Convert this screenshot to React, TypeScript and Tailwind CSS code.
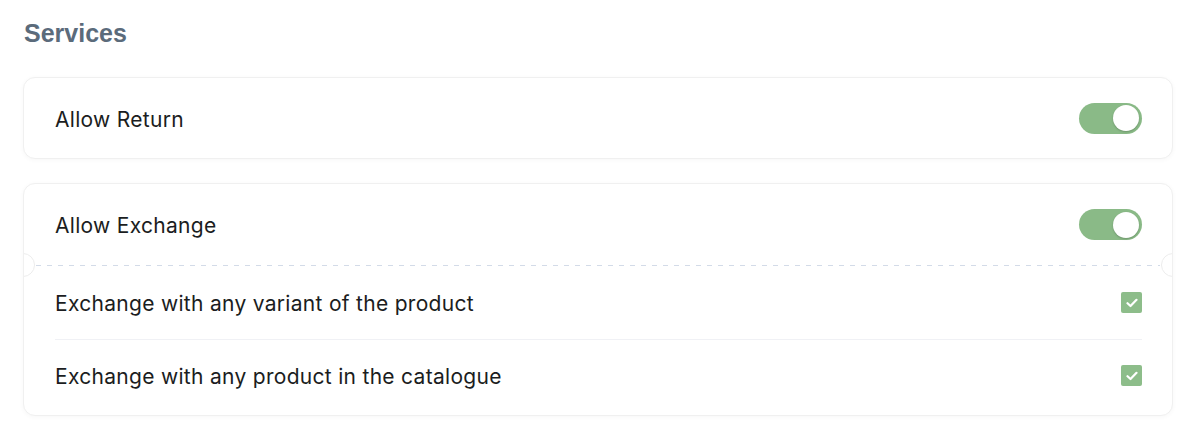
import { useState } from "react";

function Toggle({ on, onChange }: { on: boolean; onChange: (v: boolean) => void }) {
  return (
    <button
      type="button"
      onClick={() => onChange(!on)}
      className={`flex h-[31px] w-[63px] shrink-0 items-center rounded-full p-[3px] ${
        on ? "justify-end bg-[#8aba87]" : "justify-start bg-[#d9dde3]"
      }`}
    >
      <span className="h-[26px] w-[26px] rounded-full bg-white shadow-[0_1px_2px_rgba(0,0,0,0.2)]" />
    </button>
  );
}

function Check({ on, onChange }: { on: boolean; onChange: (v: boolean) => void }) {
  return (
    <button
      type="button"
      onClick={() => onChange(!on)}
      className={`flex h-[21px] w-[21px] shrink-0 items-center justify-center rounded-[2px] ${
        on ? "bg-[#8dbd8a]" : "border border-[#cfd5dd] bg-white"
      }`}
    >
      {on && (
        <svg width="12" height="10" viewBox="0 0 12 10" fill="none">
          <path d="M1.5 5.2 4.5 8 10.5 1.8" stroke="white" strokeWidth="2.2" strokeLinecap="round" strokeLinejoin="round" />
        </svg>
      )}
    </button>
  );
}

const label = "pt-[3px] text-[21px] tracking-[0.3px]";

export default function App() {
  const [allowReturn, setAllowReturn] = useState(true);
  const [allowExchange, setAllowExchange] = useState(true);
  const [anyVariant, setAnyVariant] = useState(true);
  const [anyProduct, setAnyProduct] = useState(true);

  return (
    <div className="min-h-[437px] bg-white pl-[23px] pt-[18px] font-['Inter',sans-serif] text-[#1b1d21]">
      <h2 className="pl-px font-['Liberation_Sans',Arial,sans-serif] text-[25px] font-bold leading-[30px] text-[#5b6b7b]">
        Services
      </h2>

      <div className="mt-[29px] flex w-[1150px] flex-col gap-[24px]">
        {/* Return */}
        <div className="flex h-[82px] items-center justify-between rounded-[12px] border border-[#f0f0f0] bg-white pl-[31px] pr-[30px] shadow-[0_1px_5px_rgba(0,0,0,0.035)]">
          <span className={label}>Allow Return</span>
          <Toggle on={allowReturn} onChange={setAllowReturn} />
        </div>

        {/* Exchange */}
        <div className="relative overflow-hidden rounded-[12px] border border-[#f0f0f0] bg-white shadow-[0_1px_5px_rgba(0,0,0,0.035)]">
          <div className="flex h-[81px] items-center justify-between pl-[31px] pr-[30px]">
            <span className={label}>Allow Exchange</span>
            <Toggle on={allowExchange} onChange={setAllowExchange} />
          </div>

          <div className="relative h-px">
            <div className="mx-[12px] h-px bg-[linear-gradient(to_right,#d3dbe8_50%,transparent_50%)] bg-[length:11px_1px]" />
            <span className="absolute -left-[13px] -top-[12px] h-[24px] w-[24px] rounded-full border border-[#ececec] bg-white" />
            <span className="absolute -right-[13px] -top-[12px] h-[24px] w-[24px] rounded-full border border-[#ececec] bg-white" />
          </div>

          <div className="pb-[4px] pl-[31px] pr-[30px]">
            <div className="flex h-[74px] items-center justify-between border-b border-[#f0f1f5]">
              <span className={label}>Exchange with any variant of the product</span>
              <Check on={anyVariant} onChange={setAnyVariant} />
            </div>
            <div className="flex h-[71px] items-center justify-between">
              <span className={label}>Exchange with any product in the catalogue</span>
              <Check on={anyProduct} onChange={setAnyProduct} />
            </div>
          </div>
        </div>
      </div>
    </div>
  );
}
